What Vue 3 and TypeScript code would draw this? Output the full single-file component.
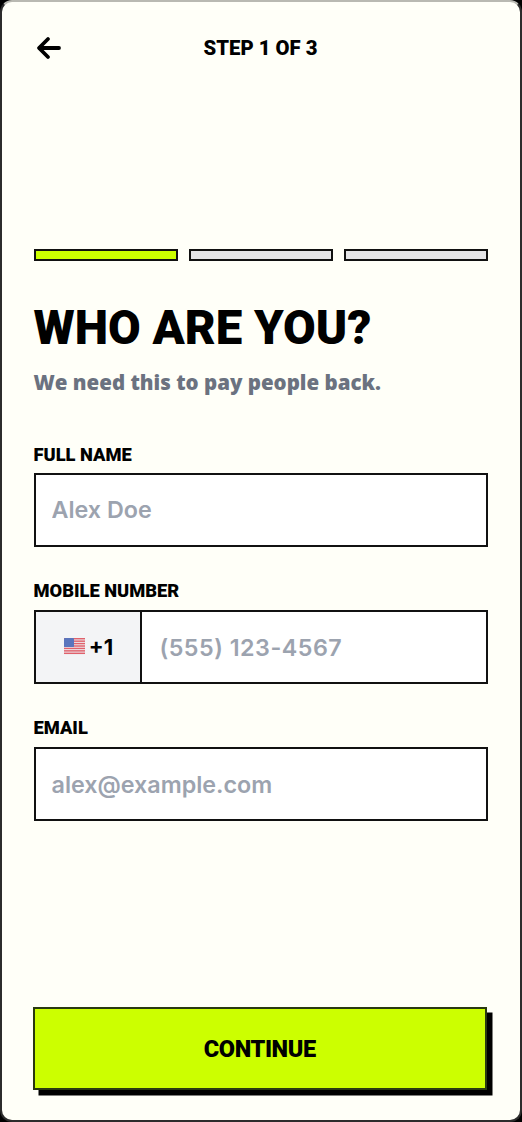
<script setup lang="ts">
const steps = [true, false, false]
const stripes = [0, 2, 4, 6, 8, 10, 12]
</script>

<template>
  <main class="screen">
    <header class="top">
      <button class="back" aria-label="Back">
        <svg width="28" height="28" viewBox="0 0 28 28" fill="none" stroke="#000" stroke-width="3.8" stroke-linecap="round" stroke-linejoin="round">
          <path d="M25 14H6" />
          <path d="M14 5 5 14l9 9" />
        </svg>
      </button>
      <div class="step">STEP 1 OF 3</div>
    </header>

    <div class="progress">
      <span v-for="(on, i) in steps" :key="i" class="seg" :class="{ on }"></span>
    </div>

    <h1>WHO ARE YOU?</h1>
    <p class="sub">We need this to pay people back.</p>

    <label class="lbl first">FULL NAME</label>
    <div class="field"><input placeholder="Alex Doe" /></div>

    <label class="lbl">MOBILE NUMBER</label>
    <div class="field">
      <div class="code">
        <svg class="flag" width="21" height="17" viewBox="0 0 21 14" preserveAspectRatio="none">
          <rect width="21" height="14" rx="2" fill="#eef0f4" />
          <rect v-for="y in stripes" :key="y" :y="y" width="21" height="1.2" fill="#e0616b" />
          <rect width="10" height="7.5" rx="1" fill="#5a75bd" />
        </svg>
        <span>+1</span>
      </div>
      <input class="low phone" placeholder="(555) 123-4567" />
    </div>

    <label class="lbl">EMAIL</label>
    <div class="field"><input class="low" placeholder="alex@example.com" /></div>

    <button class="cta">CONTINUE</button>
  </main>
</template>

<style>
html, body { margin: 0; background: #000; }
</style>

<style scoped>
.screen {
  box-sizing: border-box;
  height: 1122px;
  width: 522px;
  display: flex;
  flex-direction: column;
  background: #fffff8;
  border: 2px solid #2c2c2c;
  border-top-color: #b9b9b2;
  border-radius: 12px;
  padding: 0 32.5px 0 31.5px;
  font-family: Inter, "Liberation Sans", sans-serif;
  color: #000;
}
.top {
  position: relative;
  height: 94px;
  display: flex;
  align-items: center;
  justify-content: center;
}
.back {
  position: absolute;
  left: 0;
  top: 32px;
  padding: 0;
  border: 0;
  background: none;
  display: flex;
}
.step {
  font-family: Roboto, sans-serif;
  font-weight: 900;
  font-size: 20.3px;
  margin-top: -3px;
}
.progress {
  margin-top: 153px;
  display: flex;
  gap: 11px;
}
.seg {
  flex: 1;
  height: 11.5px;
  box-sizing: border-box;
  background: #e5e5e7;
  border: 2.5px solid #111;
}
.seg.on { background: #ccff00; }
h1 {
  margin: 39px 0 0;
  font-family: Roboto, sans-serif;
  font-size: 47.4px;
  line-height: 56px;
  font-weight: 900;
}
.sub {
  margin: 12px 0 0;
  font-family: "Open Sans", sans-serif;
  font-size: 20.5px;
  line-height: 28px;
  font-weight: 800;
  color: #6b7280;
}
.lbl {
  display: block;
  margin-top: 33px;
  font-family: Roboto, sans-serif;
  font-size: 18.3px;
  line-height: 22px;
  font-weight: 900;
}
.lbl.first { margin-top: 48px; margin-bottom: -1px; }
.field {
  margin-top: 8px;
  height: 74px;
  box-sizing: border-box;
  display: flex;
  background: #fff;
  border: 2.5px solid #111;
  overflow: hidden;
}
.code {
  width: 106px;
  box-sizing: border-box;
  flex: none;
  display: flex;
  align-items: center;
  justify-content: center;
  gap: 4px;
  padding-left: 2px;
  background: #f3f4f6;
  border-right: 2.5px solid #111;
  font-size: 22px;
  font-weight: 700;
}
input {
  flex: 1;
  min-width: 0;
  border: 0;
  outline: 0;
  background: transparent;
  padding: 0 16px;
  font: 600 23.3px Inter, "Liberation Sans", sans-serif;
}
input.low { padding-top: 2px; }
input.phone { padding-left: 18px; letter-spacing: 0.5px; }
input::placeholder { color: #9ca3af; opacity: 1; }
.cta {
  margin: auto 1px 30px -0.5px;
  height: 83.5px;
  padding-top: 3px;
  background: #ccff00;
  border: 2.5px solid #2a3a10;
  box-shadow: 5.5px 5.5px 0 #000;
  font: 900 23.5px Roboto, sans-serif;
  letter-spacing: -0.4px;
  color: #000;
}
</style>
